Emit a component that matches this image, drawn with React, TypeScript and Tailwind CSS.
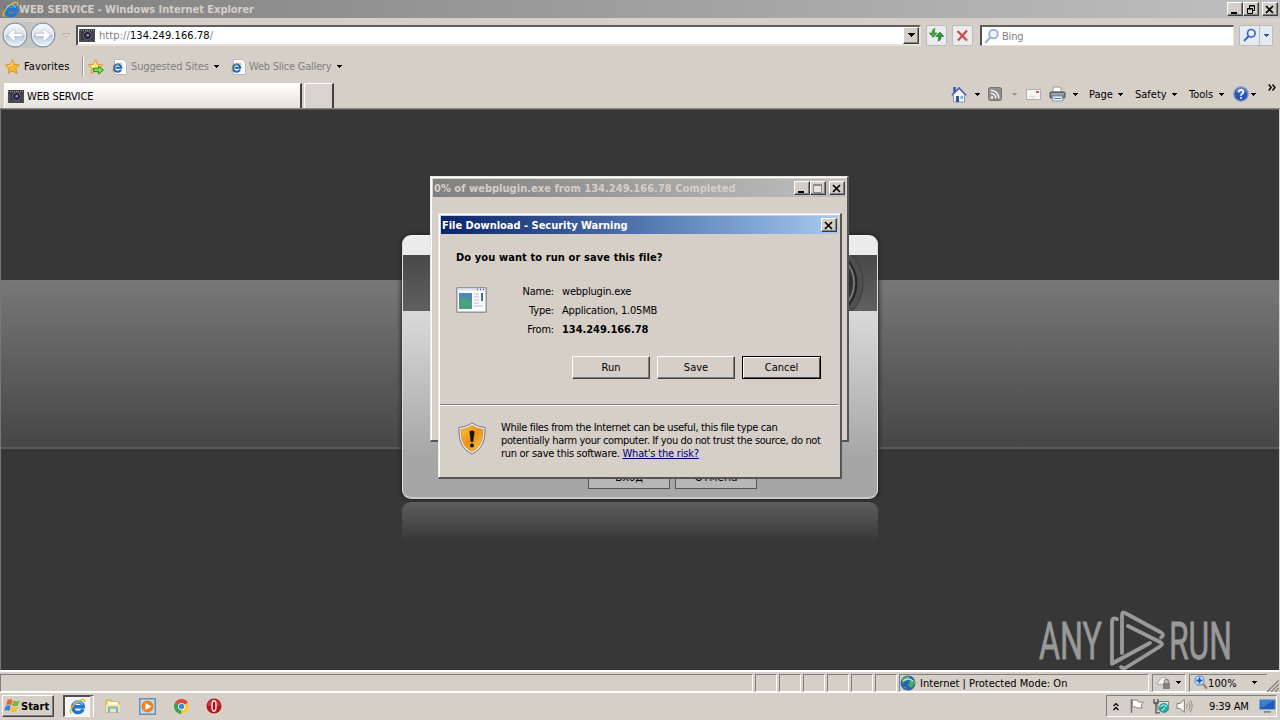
import React from 'react';
import clsx from 'clsx';

const raised = 'border border-t-white border-l-white border-r-[#404040] border-b-[#404040] shadow-[inset_-1px_-1px_0_#808080]';
const sunken = 'border border-t-[#808080] border-l-[#808080] border-r-white border-b-white';

function Caret({ className = '' }: { className?: string }) {
  return (
    <svg width="5" height="3" viewBox="0 0 5 3" className={clsx('shrink-0', className)} shapeRendering="crispEdges">
      <path d="M0 0h5v1H0zM1 1h3v1H1zM2 2h1v1H2z" fill="currentColor" />
    </svg>
  );
}

function IeIcon({ size = 16 }: { size?: number }) {
  return (
    <svg width={size} height={size} viewBox="0 0 16 16" className="shrink-0">
      <path d="M13.2 10.4A5 5 0 1 1 13.5 8.3H5.2" fill="none" stroke="#1c78d0" strokeWidth="3.200" />
      <path d="M12.8 6.2A5 5 0 0 0 4 6" fill="none" stroke="#6cc4f6" strokeWidth="1.2" />
      <path d="M2.3 14.6C-.8 13.5 3 6.500 8.300 3.200 12 .9 15.600 .3 14.500 4.200" fill="none" stroke="#e9b52a" strokeWidth="1.3" />
    </svg>
  );
}

function IePageIcon() {
  return (
    <svg width="15" height="16" viewBox="0 0 15 16" className="shrink-0">
      <path d="M2.500 .5H11L14.500 4V15.500H2.500z" fill="#fff" stroke="#b9b9c4" />
      <path d="M9 10.600A3.700 3.700 0 1 1 9.300 8.700H3.500" fill="none" stroke="#1667bd" strokeWidth="2.100" />
      <path d="M1.300 12.800C-.5 11 3 6.500 6.500 4.800 9 3.600 10.600 3.800 10 6" fill="none" stroke="#d9a520" strokeWidth=".9" />
    </svg>
  );
}

function CameraIcon() {
  return (
    <svg width="16" height="13" viewBox="0 0 16 13" className="shrink-0">
      <path d="M0 0h16v13H0z" fill="#3b3a41" />
      <path d="M0 1.500h16" stroke="#8d8d96" strokeWidth="1.500" strokeDasharray="1 1" />
      <path d="M0 12h16M1 4v7M15 4v7" stroke="#77737f" strokeDasharray="1.500 1" />
      <circle cx="8.500" cy="6.500" r="4" fill="#17151f" stroke="#77718c" />
      <circle cx="8.500" cy="6.500" r="2" fill="#5b4a8e" />
      <circle cx="9" cy="6" r=".8" fill="#d6d0ee" />
    </svg>
  );
}

function StarIcon({ arrow = false }: { arrow?: boolean }) {
  return (
    <svg width="16" height="16" viewBox="0 0 16 16" className="shrink-0">
      <path d="M7.500 .8l2.100 4.600 5 .6-3.700 3.400 1 5-4.400-2.500-4.400 2.500 1-5L.5 6l5-.6z" fill={arrow ? '#fbe27a' : '#f9b62c'} stroke="#d9952b" />
      <path d="M7.500 3L6.300 6.400 3 6.900" fill="none" stroke="#fff0b0" />
      {arrow && <path d="M5.500 9.300h5V7l5 4-5 4v-2.400h-5z" fill="#7ddb4b" stroke="#23911d" />}
    </svg>
  );
}

function NavArrow({ flip = false }: { flip?: boolean }) {
  return (
    <svg width="26" height="26" viewBox="0 0 26 26" className={clsx('shrink-0', flip && '-scale-x-100')}>
      <defs>
        <linearGradient id="nav" x1="0" y1="0" x2="0" y2="1">
          <stop offset="0" stopColor="#fafcfe" />
          <stop offset=".48" stopColor="#dbe2ea" />
          <stop offset=".52" stopColor="#b7c8da" />
          <stop offset="1" stopColor="#eef7ff" />
        </linearGradient>
      </defs>
      <circle cx="13" cy="13" r="11.800" fill="url(#nav)" stroke="#8a97a6" strokeWidth="1.300" />
      <circle cx="13" cy="13" r="10.600" fill="none" stroke="#f4f8fc" />
      <path d="M5.500 13l6-6 2.400 2.200L12 11.300h8.500v3.400H12l1.900 2.100-2.400 2.200z" fill="#fff" stroke="#a9b7c6" strokeWidth=".7" />
    </svg>
  );
}

function Magnifier({ color, size = 16 }: { color: string; size?: number }) {
  return (
    <svg width={size} height={size} viewBox="0 0 16 16" className="shrink-0">
      <circle cx="9.500" cy="6" r="4.300" fill="#eef6fd" stroke={color} strokeWidth="1.900" />
      <path d="M6.300 9.500L1.800 14.200" stroke={color} strokeWidth="2.300" strokeLinecap="round" />
    </svg>
  );
}

function CaptionButton({ kind, className = '' }: { kind: 'min' | 'max' | 'restore' | 'close'; className?: string }) {
  return (
    <button className={clsx('flex h-[14px] w-4 shrink-0 items-center justify-center bg-[#d5cfc8]', raised, className)}>
      <svg width="12" height="11" viewBox="0 0 12 11" className="shrink-0">
        {kind === 'min' && <path d="M2 8h6v2H2z" />}
        {kind === 'max' && <path d="M1.500 1.500h8v8h-8zM1 2.500h9" fill="#e6e3dd" stroke="#8d8a85" />}
        {kind === 'restore' && (
          <path d="M4.500 4V1.500h5v5h-2M4 2h6M2.500 4.500h5v5h-5zM2 5h6" fill="none" stroke="#000" />
        )}
        {kind === 'close' && <path d="M2 2l7 7M9 2l-7 7" stroke="#000" strokeWidth="1.700" />}
      </svg>
    </button>
  );
}

function TitleBar() {
  return (
    <div className="flex h-[18px] items-center bg-linear-to-r from-[#808080] to-[#c0c0c0] pl-[2px] pr-[2px]">
      <IeIcon size={17} />
      <span className="pt-[2px] font-bold tracking-[-0.03px] text-[#d5cfc8]">WEB SERVICE - Windows Internet Explorer</span>
      <div className="ml-auto flex">
        <CaptionButton kind="min" />
        <CaptionButton kind="restore" />
        <CaptionButton kind="close" className="ml-[3px]" />
      </div>
    </div>
  );
}

function AddressBar() {
  return (
    <div className="flex h-[35px] items-center pb-[1px] pl-[2px]">
      <div className="flex gap-[2px] rounded-full bg-[#c5c5c3]">
        <NavArrow />
        <NavArrow flip />
      </div>
      <svg width="8" height="5" viewBox="0 0 8 5" className="ml-[6px]">
        <path d="M.5 .5h7L4 4.500z" fill="#ddd9d2" stroke="#aaa69e" strokeWidth=".7" />
      </svg>
      <div className="ml-[6px] flex h-[21px] w-[845px] items-center border-2 border-t-[#606060] border-l-[#505050] border-r-[#e5e2dc] border-b-[#e5e2dc] bg-white pl-[1px]">
        <CameraIcon />
        <span className="ml-[4px] pt-[2px] tracking-[0.08px] text-[#808080]">
          http://<span className="text-black">134.249.166.78</span>/
        </span>
        <div className={clsx('ml-auto flex h-[17px] w-4 items-center justify-center bg-[#d5cfc8]', raised)}>
          <svg width="7" height="4" viewBox="0 0 7 4" shapeRendering="crispEdges">
            <path d="M0 0h7v1H0zM1 1h5v1H1zM2 2h3v1H2zM3 3h1v1H3z" />
          </svg>
        </div>
      </div>
      <div className="ml-[5px] flex h-[21px] w-[21px] items-center justify-center rounded-[2px] border border-[#b4bcc6] bg-[#ebecee]">
        <svg width="17" height="16" viewBox="0 0 17 16">
          <path d="M7 1.500C4.500 1.800 4 3.500 4 6H1.200l4 4.500L9.200 6H6.800C6.700 4 6.500 3 7 1.500z" fill="#3da63a" stroke="#23762a" strokeWidth=".5" />
          <path d="M10 14c2.500-.3 3.200-2 3.200-4.500H16L11.800 5 7.800 9.500h2.500c0 2 .2 3-.3 4.500z" fill="#319334" stroke="#1d6324" strokeWidth=".5" />
        </svg>
      </div>
      <div className="ml-[5px] flex h-[21px] w-[21px] items-center justify-center rounded-[2px] border border-[#b4bcc6] bg-[#ebecee]">
        <svg width="13" height="13" viewBox="0 0 13 13">
          <path d="M1.500 2L11 11.500M11 1.500L2 11.500" stroke="#cc4a48" strokeWidth="2.200" />
        </svg>
      </div>
      <div className="ml-[7px] flex h-[21px] w-[254px] items-center border border-t-2 border-l-2 border-t-[#606060] border-l-[#505050] border-r-[#e5e2dc] border-b-[#e5e2dc] bg-white pl-[2px]">
        <Magnifier color="#9fb4c8" />
        <span className="ml-[2px] pt-[2px] tracking-[-0.2px] text-[#808080]">Bing</span>
      </div>
      <div className="ml-[5px] flex h-[21px] w-[34px] items-center rounded-[2px] border border-[#b4bcc6] bg-[#e6ebf2]">
        <div className="flex h-full w-[20px] items-center justify-center border-r border-[#b4bcc6]">
          <Magnifier color="#2f66d0" size={14} />
        </div>
        <Caret className="ml-[4px] text-[#2456a8]" />
      </div>
    </div>
  );
}

function FavoritesBar() {
  return (
    <div className="flex h-[27px] items-center pl-[5px]">
      <StarIcon />
      <span className="ml-[3px] w-[47px] tracking-[0.1px]">Favorites</span>
      <div className="ml-[11px] h-[19px] w-[2px] border-l border-[#9a968f] bg-white" />
      <div className="ml-[4px]">
        <StarIcon arrow />
      </div>
      <div className="ml-[8px] flex items-center">
        <IePageIcon />
        <span className="ml-[4px] w-[78px] pt-[1px] tracking-[-0.14px] text-[#808080]">Suggested Sites</span>
        <Caret className="ml-[5px]" />
      </div>
      <div className="ml-[12px] flex items-center">
        <IePageIcon />
        <span className="ml-[3px] w-[82px] pt-[1px] tracking-[-0.24px] text-[#808080]">Web Slice Gallery</span>
        <Caret className="ml-[6px]" />
      </div>
    </div>
  );
}

function TabRow() {
  return (
    <div className="flex h-[29px] items-end border-b border-[#8a8883]">
      <div className="ml-[4px] flex h-[25px] w-[298px] items-center border-t border-l border-r-2 border-t-white border-l-white border-r-[#404040] bg-linear-to-b from-white to-[#e4e1dc] pl-[3px] pt-[1px]">
        <CameraIcon />
        <span className="ml-[3px] tracking-[-0.12px]">WEB SERVICE</span>
      </div>
      <div className="ml-[2px] h-[25px] w-[30px] border-t border-l border-r-2 border-t-white border-l-white border-r-[#404040] bg-[#d8d3cc]" />
      <div className="mb-[3px] ml-[617px] flex h-[22px] items-center">
        <svg width="16" height="17" viewBox="0 0 16 17" className="shrink-0">
          <path d="M2.500 8.500L8 3l5.500 5.500V16h-11z" fill="#f2f4fb" stroke="#8994ba" />
          <path d="M.8 9.300L8 2l7.200 7.300" fill="none" stroke="#5868b4" strokeWidth="1.600" />
          <path d="M2.300 1h2.400v4L2.300 7z" fill="#3a4da8" />
          <path d="M5 10h3v6H5z" fill="#315895" />
          <path d="M9.500 10h2.500v3H9.500z" fill="#74b6dd" />
        </svg>
        <Caret className="ml-[8px]" />
        <svg width="14" height="14" viewBox="0 0 14 14" className="ml-[8px] shrink-0">
          <rect x=".5" y=".5" width="13" height="13" rx="2" fill="#8f8e8b" stroke="#777571" />
          <circle cx="4" cy="10.500" r="1.300" fill="#f4f2ee" />
          <path d="M2.800 6.300a5 5 0 0 1 5 5M2.800 3.200a8 8 0 0 1 8 8" fill="none" stroke="#f4f2ee" strokeWidth="1.500" />
        </svg>
        <Caret className="ml-[10px] text-[#a09c95]" />
        <svg width="15" height="11" viewBox="0 0 15 11" className="ml-[9px] shrink-0">
          <rect x=".5" y=".5" width="14" height="10" fill="#f6f4f2" stroke="#b4afae" />
          <path d="M10 2h3v2h-3z" fill="#c85f72" />
          <path d="M3 8h6" stroke="#d4cfcd" />
        </svg>
        <svg width="17" height="16" viewBox="0 0 17 16" className="ml-[8px] shrink-0">
          <path d="M4.500 1h7l1 5h-9z" fill="#fff" stroke="#8f969e" />
          <rect x="1" y="6" width="15" height="6" rx="1" fill="#777b82" stroke="#4d5157" />
          <path d="M2 8h13" stroke="#c4c9cf" />
          <path d="M4 10h9l1 5H3z" fill="#dff0f8" stroke="#8e9aa6" />
          <path d="M5 12.500h7" stroke="#3f87b5" />
        </svg>
        <Caret className="ml-[7px]" />
        <span className="ml-[11px] w-[24px] pt-[1px]">Page</span>
        <Caret className="ml-[5px]" />
        <span className="ml-[12px] w-[32px] pt-[1px]">Safety</span>
        <Caret className="ml-[5px]" />
        <span className="ml-[12px] w-[25px] pt-[1px]">Tools</span>
        <Caret className="ml-[5px]" />
        <svg width="16" height="16" viewBox="0 0 16 16" className="ml-[9px] shrink-0">
          <circle cx="8" cy="8" r="7.200" fill="#2b55b8" stroke="#8e9ec6" strokeWidth="1.300" />
          <path d="M3 6a5 4.500 0 0 1 10 0c-3 1.500-7 1.500-10 0z" fill="#7f9fdf" opacity=".6" />
          <path d="M5.600 6.200C5.600 3 10.500 3.200 10.400 6 10.300 7.700 8 7.600 8 9.800M8 11v1.800" fill="none" stroke="#fff" strokeWidth="1.700" />
        </svg>
        <Caret className="ml-[2px]" />
        <svg width="8" height="7" viewBox="0 0 8 7" className="mb-[13px] ml-[12px] shrink-0">
          <path d="M.7 .5l2.500 3-2.500 3M4.500 .5l2.500 3-2.500 3" fill="none" stroke="#000" strokeWidth="1.400" />
        </svg>
      </div>
    </div>
  );
}

function LoginCard() {
  return (
    <div className="mx-auto w-[476px] pt-[125px]">
      <div className="flex h-[264px] flex-col rounded-[9px] border border-b-2 border-[#dedede] border-t-[#f2f2f2] border-b-[#c8c8c8] bg-linear-to-b from-[#ececec] from-5% via-[#d4d4d4] via-35% to-[#a6a6a6] to-85% shadow-[0_0_4px_1px_#242424]">
        <div className="mt-[19px] flex h-[56px] shrink-0 justify-end overflow-hidden bg-linear-to-b from-[#494949] to-[#606060]">
          <svg width="90" height="56" viewBox="0 0 90 56">
            <circle cx="35" cy="28" r="41" fill="#505050" stroke="#444" strokeWidth="1.500" />
            <circle cx="35" cy="28" r="34.500" fill="#4a4a4a" stroke="#262626" strokeWidth="2" />
            <circle cx="35" cy="28" r="32" fill="#3c3c3c" stroke="#888" strokeWidth="1.200" />
            <circle cx="35" cy="28" r="30" fill="#303030" />
          </svg>
        </div>
        <div className="mt-auto mb-[8px] ml-[185px] flex gap-[5px]">
          <button className="h-[23px] w-[82px] border border-[#555] bg-[#b7b7b7] pb-[1px] text-[12px]">Вход</button>
          <button className="h-[23px] w-[82px] border border-[#555] bg-[#b7b7b7] pb-[1px] text-[12px]">Отмена</button>
        </div>
      </div>
      <div className="mt-[3px] h-[40px] rounded-t-[9px] bg-linear-to-b from-[#5e5e5e] to-[#373737]" />
    </div>
  );
}

function Watermark() {
  return (
    <svg width="220" height="72" viewBox="0 -6 220 72" className="absolute bottom-[-5px] left-[1033px]">
      <g fill="#999" stroke="#999" strokeWidth=".8" fontFamily="Roboto, sans-serif" fontSize="51">
        <text x="5" y="50" textLength="63" lengthAdjust="spacingAndGlyphs">ANY</text>
        <text x="135" y="50" textLength="63" lengthAdjust="spacingAndGlyphs">RUN</text>
      </g>
      <g fill="none" stroke="#999" strokeWidth="3.800" strokeLinejoin="round" strokeLinecap="round">
        <path d="M83 10Q78 8 78 13V54.500L87 50" />
        <path d="M78 54.500L116 34" />
        <path d="M88 44V6Q88 2 92 4.500L127 23.500Q131 26 127 28.500" />
        <path d="M94 17L126 33Q130 35 126 37.500L93 58Q89 60.500 87 58" />
      </g>
    </svg>
  );
}

function ProgressWindow() {
  return (
    <div className="absolute top-[66px] left-[429px] flex h-[266px] w-[419px] flex-col border-t border-l border-t-[#e8e6e1] border-l-[#e8e6e1] border-r-2 border-b-2 border-r-[#555] border-b-[#555] bg-[#d5cfc8] p-[1px] shadow-[inset_1px_1px_0_#fff]">
      <div className="mx-[1px] mt-[1px] flex h-[18px] items-center bg-linear-to-r from-[#808080] to-[#c0c0c0] pl-[1px]">
        <span className="pt-[1px] font-bold tracking-[0.03px] text-[#d5cfc8]">0% of webplugin.exe from 134.249.166.78 Completed</span>
        <div className="ml-auto flex">
          <CaptionButton kind="min" />
          <CaptionButton kind="max" />
          <CaptionButton kind="close" className="ml-[3px]" />
        </div>
      </div>
    </div>
  );
}

const fileInfo = [
  { label: 'Name:', value: 'webplugin.exe', className: 'tracking-[-0.2px]' },
  { label: 'Type:', value: 'Application, 1.05MB', className: 'tracking-[-0.2px]' },
  { label: 'From:', value: '134.249.166.78', className: 'font-bold tracking-[-0.05px]' },
];

function SecurityDialog() {
  return (
    <div className="absolute top-[103px] left-[437px] flex h-[266px] w-[404px] flex-col border-t border-l border-t-[#e8e6e1] border-l-[#e8e6e1] border-r-2 border-b-2 border-r-[#555] border-b-[#555] bg-[#d5cfc8] p-[1px] shadow-[inset_1px_1px_0_#fff]">
      <div className="mx-[1px] mt-[1px] flex h-[18px] shrink-0 items-center bg-linear-to-r from-[#0a246a] to-[#a6caf0] pr-[1px] pl-[1px]">
        <span className="pt-[1px] font-bold tracking-[-0.02px] text-white">File Download - Security Warning</span>
        <CaptionButton kind="close" className="ml-auto" />
      </div>
      <p className="mt-[17px] ml-[16px] leading-[14px] font-bold tracking-[0.1px]">Do you want to run or save this file?</p>
      <div className="mt-[17px] ml-[16px] flex">
        <svg width="31" height="26" viewBox="0 0 31 26" className="mt-[5px] shrink-0">
          <rect x=".75" y=".75" width="29.500" height="24.500" rx="1" fill="#fbfbfc" stroke="#92959d" strokeWidth="1.500" />
          <path d="M2 2.500h27" stroke="#dfe4ec" strokeWidth="2" />
          <path d="M21 2.500h1M24 2.500h1M27 2.500h1" stroke="#4c5e86" strokeWidth="1.500" />
          <rect x="3" y="6" width="13" height="16" fill="#4c86bd" />
          <path d="M3 13Q8 6 16 15v7H3z" fill="#46a27d" />
          <path d="M18 7h5M18 10h5M18 13h5M18 16h5M18 19h9" stroke="#b9bec7" />
          <path d="M25 6h2v8h-2z" fill="#3b718b" />
        </svg>
        <div className="ml-[22px] flex flex-col">
          {fileInfo.map((row) => (
            <div key={row.label} className="flex h-[19px] items-center">
              <span className="w-[45px] text-right tracking-[-0.2px]">{row.label}</span>
              <span className={clsx('ml-[8px]', row.className)}>{row.value}</span>
            </div>
          ))}
        </div>
      </div>
      <div className="mt-[17px] flex h-[23px] shrink-0 justify-end gap-[7px] pr-[18px]">
        <button className={clsx('w-[78px]', raised)}>Run</button>
        <button className={clsx('w-[78px]', raised)}>Save</button>
        <button className="w-[79px] border border-black shadow-[inset_1px_1px_0_#fff,inset_-1px_-1px_0_#505050]">Cancel</button>
      </div>
      <div className="mt-[25px] mr-[1px] h-[2px] shrink-0 border-b border-white bg-[#808080]" />
      <div className="mt-[15px] ml-[18px] flex">
        <svg width="28" height="33" viewBox="0 0 28 33" className="mt-[1px] shrink-0">
          <defs>
            <linearGradient id="shield" x1="0" y1="0" x2="1" y2="1">
              <stop offset="0" stopColor="#f9c445" />
              <stop offset=".5" stopColor="#ef8f15" />
              <stop offset="1" stopColor="#fbd65a" />
            </linearGradient>
          </defs>
          <path d="M14 1Q20 5 27 5.500C27.500 17 25 27 14 32 3 27 .5 17 1 5.500 8 5 14 1 14 1z" fill="#e9e9e4" stroke="#77797c" />
          <path d="M14 3.500Q19 7 25 7.500C25 17 23 25 14 29.500 5 25 3 17 3 7.500 9 7 14 3.500 14 3.500z" fill="url(#shield)" stroke="#c47c16" strokeWidth=".6" />
          <path d="M11.500 9.500Q14 7.500 16.500 9.500L15.200 20h-2.400z" fill="#141414" />
          <circle cx="14" cy="23.500" r="2" fill="#141414" />
        </svg>
        <p className="ml-[15px] leading-[13px]">
          <span className="block tracking-[-0.33px]">While files from the Internet can be useful, this file type can</span>
          <span className="block tracking-[-0.37px]">potentially harm your computer. If you do not trust the source, do not</span>
          <span className="block tracking-[-0.29px]">
            run or save this software. <a className="tracking-[-0.18px] text-[#00007e] underline">What's the risk?</a>
          </span>
        </p>
      </div>
    </div>
  );
}

function StatusBar() {
  return (
    <div className="flex h-[22px] items-center border-t-2 border-t-white pt-[1px]">
      <div className={clsx('h-[18px] w-[753px]', sunken)} />
      <div className="ml-[2px] flex gap-[2px]">
        {[0, 1, 2, 3, 4, 5].map((i) => (
          <div key={i} className={clsx('h-[18px] w-[22px]', sunken)} />
        ))}
      </div>
      <div className={clsx('ml-[2px] flex h-[18px] w-[250px] items-center', sunken)}>
        <svg width="16" height="16" viewBox="0 0 16 16" className="shrink-0">
          <circle cx="8" cy="8" r="7.500" fill="#2661b4" />
          <path d="M2 4Q6 0 10 1.500L8 5 4 7 2 9zM10 6l5-1v4l-4 4-3-3zM3 11l3 1 1 3z" fill="#4bae56" />
          <path d="M3 6Q8 2 13 6" fill="none" stroke="#b4e1f4" strokeWidth="1.300" />
        </svg>
        <span className="ml-[4px] pt-[2px] tracking-[0.02px]">Internet | Protected Mode: On</span>
      </div>
      <div className={clsx('ml-[3px] flex h-[18px] w-[34px] items-center pl-[3px]', sunken)}>
        <svg width="16" height="15" viewBox="0 0 16 15" className="shrink-0">
          <path d="M1 9Q4 2 9 2l3 4-6 4z" fill="#f0efee" stroke="#aaa7a3" />
          <path d="M8.500 8V6.500a2 2 0 0 1 4 0V8" fill="none" stroke="#898886" strokeWidth="1.300" />
          <path d="M7 8h7v6H7z" fill="#83827f" />
        </svg>
        <Caret className="ml-[4px]" />
      </div>
      <div className={clsx('ml-[3px] flex h-[18px] w-[78px] items-center border-r-0 pl-[4px]', sunken)}>
        <svg width="14" height="15" viewBox="0 0 14 15" className="shrink-0">
          <circle cx="5.500" cy="5.500" r="4.500" fill="#d7eaff" stroke="#719bcf" strokeWidth="1.300" />
          <path d="M5.500 2.500v6M2.500 5.500h6" stroke="#1657b5" strokeWidth="1.800" />
          <path d="M9 9l4 4.500" stroke="#9d7b5e" strokeWidth="2" />
        </svg>
        <span className="pt-[2px] tracking-[0.1px]">100%</span>
        <Caret className="ml-[15px]" />
      </div>
      <svg width="13" height="13" viewBox="0 0 13 13" className="mt-[6px] -ml-[1px] shrink-0">
        <path d="M1 13L13 1M5 13l8-8M9 13l4-4" stroke="#8a8781" strokeWidth="1.500" />
      </svg>
    </div>
  );
}

function Taskbar() {
  return (
    <div className="flex h-[27px] items-center border-t border-white pl-[2px]">
      <button className={clsx('flex h-[22px] w-[52px] items-center pl-[1px]', raised)}>
        <svg width="17" height="16" viewBox="0 0 17 16" className="shrink-0">
          <path d="M3.500 2Q6 .5 8.500 2.200L7 7.200Q4.500 5.500 2 7z" fill="#e8632a" />
          <path d="M9.500 2.600Q12.500 4 15.500 2.500L14 7.600Q11 9 8 7.600z" fill="#79b83b" />
          <path d="M1.700 8Q4.500 6.500 6.700 8.200L5.300 13Q3 11.500 .3 13z" fill="#3b7fd4" />
          <path d="M7.700 8.700Q10.500 10 13.700 8.700L12.200 13.500Q9.500 15 6.300 13.600z" fill="#f6c02d" />
        </svg>
        <span className="pt-[2px] font-bold">Start</span>
      </button>
      <div className="ml-[9px] flex h-[22px] w-[28px] items-center justify-center border-t-2 border-l-2 border-r border-b border-t-[#505050] border-l-[#505050] border-r-[#d5cfc8] border-b-white bg-[#f6f5f3]">
        <IeIcon size={17} />
      </div>
      <div className="h-[22px] w-[3px] border-t border-r border-t-[#505050] border-r-white" />
      <svg width="16" height="16" viewBox="0 0 16 16" className="ml-[11px]">
        <path d="M1 2h5l1 2h7v10H1z" fill="#f2d979" stroke="#c9a950" />
        <path d="M3 4h10v4H3z" fill="#fffbe3" />
        <path d="M1 6.500h14V14H1z" fill="#f8e7a0" />
        <path d="M4 15V9.500h8V15" fill="none" stroke="#72b7d8" strokeWidth="2.200" />
      </svg>
      <svg width="17" height="17" viewBox="0 0 17 17" className="ml-[18px]">
        <rect x=".75" y=".75" width="15.500" height="15.500" fill="#c4daf0" stroke="#6590bd" strokeWidth="1.500" />
        <circle cx="8.500" cy="8.500" r="6" fill="#f0831e" />
        <path d="M6.500 5l6 3.500-6 3.500z" fill="#fff" />
      </svg>
      <svg width="15" height="15" viewBox="0 0 15 15" className="ml-[18px]">
        <path d="M7.500 7.500L1 3.800A7.500 7.500 0 0 1 14 3.800z" fill="#dc4937" />
        <path d="M7.500 7.500L1 3.800A7.500 7.500 0 0 0 7.500 15z" fill="#35a254" />
        <path d="M7.500 7.500L14 3.800A7.500 7.500 0 0 1 7.500 15z" fill="#f7cd35" />
        <circle cx="7.500" cy="7.500" r="3.500" fill="#fff" />
        <circle cx="7.500" cy="7.500" r="2.700" fill="#4285dc" />
      </svg>
      <svg width="16" height="16" viewBox="0 0 16 16" className="ml-[17px]">
        <circle cx="8" cy="8" r="7.500" fill="#b0161b" />
        <path d="M2 5Q8-2 14 5v3H2z" fill="#d8464a" opacity=".7" />
        <ellipse cx="8" cy="8" rx="2" ry="5.200" fill="#a41115" stroke="#f9e8e8" strokeWidth="1.500" />
      </svg>
      <div className={clsx('ml-auto mr-[3px] flex h-[22px] w-[171px] items-center pl-[6px]', sunken)}>
        <svg width="6" height="9" viewBox="0 0 6 9">
          <path d="M.5 4L3 1.500 5.500 4M.5 8L3 5.500 5.500 8" fill="none" stroke="#000" strokeWidth="1.300" />
        </svg>
        <svg width="16" height="16" viewBox="0 0 16 16" className="ml-[10px]">
          <path d="M2.500 1v14" stroke="#777" strokeWidth="1.600" />
          <path d="M3.500 2h5l1 2h5l-2 3 1 3H8L7 9H3.500z" fill="#fdfdfb" stroke="#888580" />
        </svg>
        <svg width="17" height="16" viewBox="0 0 17 16" className="ml-[8px]">
          <path d="M5 3.500h11v8H5z" fill="#e7e7e5" stroke="#6d6d6a" />
          <path d="M1 1v4h4V1M3 5v10h4" fill="none" stroke="#555" strokeWidth="1.400" />
          <circle cx="11" cy="10" r="5" fill="#27a4a0" />
          <path d="M8 9q3-4 6 0M9 13l3-3" fill="none" stroke="#a8eee6" strokeWidth="1.200" />
        </svg>
        <svg width="17" height="16" viewBox="0 0 17 16" className="ml-[7px]">
          <path d="M1 5.500h3L8.500 1.500v13L4 10.500H1z" fill="#fbfaf8" stroke="#807d78" />
          <path d="M10.500 5.500q2 2.500 0 5M12.500 3.500q3.500 4.500 0 9M14.500 2q4 6 0 12" fill="none" stroke="#8c8984" />
        </svg>
        <span className="ml-[16px] w-[41px] pt-[2px] tracking-[-0.15px]">9:39 AM</span>
        <svg width="17" height="14" viewBox="0 0 17 14" className="ml-[10px]">
          <path d="M.5 .5h16v10H.5z" fill="#205bb5" stroke="#8ba9cc" />
          <path d="M1 1h15L2 9z" fill="#4f98dd" opacity=".6" />
          <path d="M5 13h7" stroke="#6b7a8c" strokeWidth="1.500" />
        </svg>
      </div>
    </div>
  );
}

function App() {
  return (
    <div className="flex h-[720px] w-[1280px] flex-col overflow-hidden bg-[#d5cfc8] font-['DejaVu_Sans_Condensed','DejaVu_Sans',sans-serif] text-[11px] leading-[14px] whitespace-nowrap text-black">
      <TitleBar />
      <AddressBar />
      <FavoritesBar />
      <TabRow />

      {/* Web page with the download windows on top */}
      <main className="relative h-[561px] w-[1279px] border-t border-l border-t-[#555] border-l-[#777] bg-[#373737]">
        <div className="h-full bg-[linear-gradient(#787878,#464646_98.5%,#5c5c5c_99%)] bg-[length:100%_169px] bg-[position:0_170px] bg-no-repeat">
          <LoginCard />
        </div>
        <Watermark />
        <ProgressWindow />
        <SecurityDialog />
      </main>

      <StatusBar />
      <Taskbar />
    </div>
  );
}

export default App;
